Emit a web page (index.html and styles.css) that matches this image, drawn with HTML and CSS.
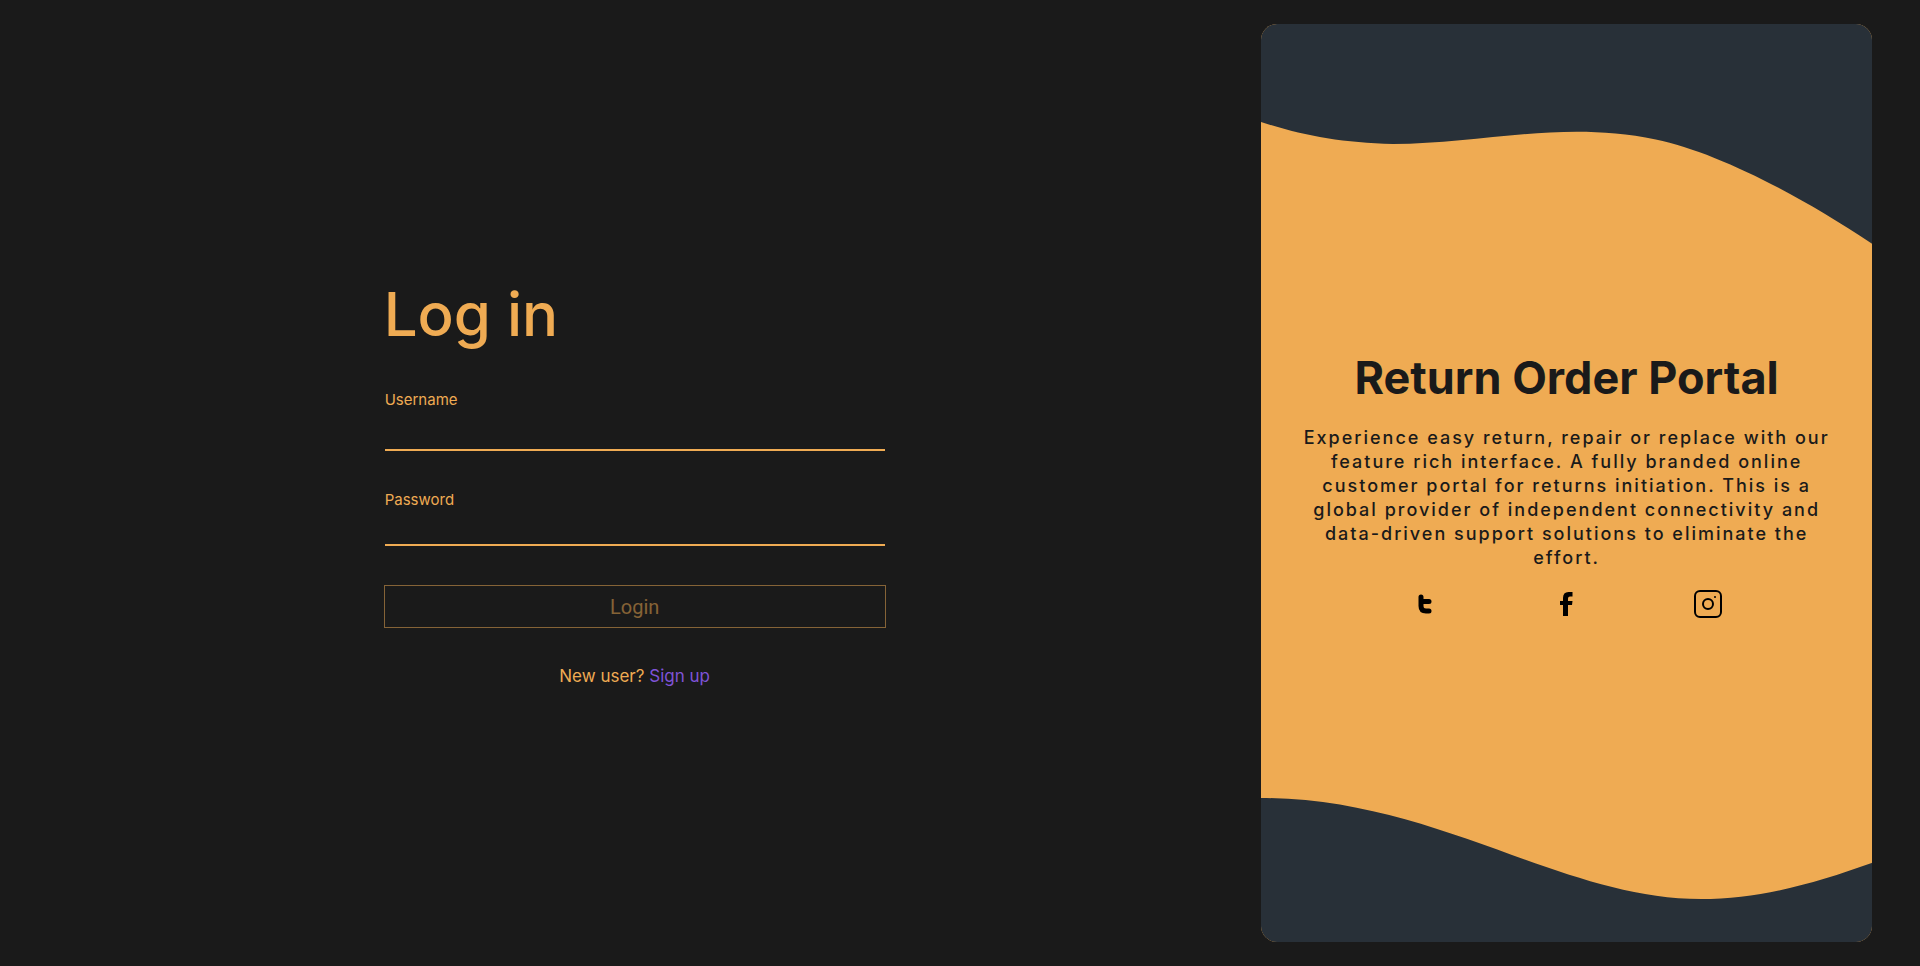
FILE: index.html
```html
<!DOCTYPE html>
<html lang="en">
<head>
<meta charset="utf-8">
<title>Return Order Portal</title>
<link rel="stylesheet" href="styles.css">
</head>
<body>
<main class="page">
  <section class="login">
    <form class="login-form">
      <h1 class="login-title">Log in</h1>
      <div class="field field-user">
        <label for="username">Username</label>
        <input id="username" type="text" autocomplete="username">
      </div>
      <div class="field">
        <label for="password">Password</label>
        <input id="password" type="password" autocomplete="current-password">
      </div>
      <button class="login-button" type="submit" disabled>Login</button>
      <p class="signup">New user? <a href="#">Sign up</a></p>
    </form>
  </section>
  <aside class="card">
    <svg class="waves" viewBox="0 0 611 918" preserveAspectRatio="none" aria-hidden="true">
      <path d="M-2 0H613V221L611 219.500C535 169 455 128 395 115.500C300 96 220 120 132 120C80 119 40 111 0 98L-2 97Z"/>
      <path d="M-2 774H0C175 774 300 875 440 875C500 875 555 859 611 839L613 838V918H-2Z"/>
    </svg>
    <div class="card-body">
      <h2 class="card-title">Return Order Portal</h2>
      <p class="card-text">Experience easy return, repair or replace with our feature rich interface. A fully branded online customer portal for returns initiation. This is a global provider of independent connectivity and data-driven support solutions to eliminate the effort.</p>
      <nav class="social">
        <a href="#" aria-label="Twitter"><svg width="32" height="32" viewBox="0 0 32 32"><path d="M9.500 9A2.500 2.500 0 0 1 14.500 9V11H20A2.500 2.500 0 0 1 20 16H14.500V18Q14.500 20.500 17 20.500H20A2.500 2.500 0 0 1 20 25.500H17Q9.500 25.500 9.500 18Z"/></svg></a>
        <a href="#" aria-label="Facebook"><svg width="32" height="32" viewBox="1 0 32 32"><path d="M13 28V17H10V13H13V10Q13 4 18.500 4H22.500V8.500H20Q18 8.500 18 10.500V13H22.500L22 17H18V28Z"/></svg></a>
        <a href="#" aria-label="Instagram"><svg width="32" height="32" viewBox="1 0 32 32"><g fill="none" stroke="#000" stroke-width="2"><rect x="3" y="3" width="26" height="26" rx="5"/><circle cx="16" cy="16" r="5"/></g><circle cx="23" cy="9" r="1"/></svg></a>
      </nav>
    </div>
  </aside>
</main>
</body>
</html>
```
FILE: styles.css
```css
* {
  box-sizing: border-box;
}

body {
  margin: 0;
  background: #1a1a1a;
  color: #efab53;
  font-family: Inter, "Liberation Sans", sans-serif;
}

.page {
  display: grid;
  grid-template-columns: 2fr 1fr;
  gap: 16px;
  min-height: 100vh;
  padding: 24px 48px 24px 24px;
}

.login {
  display: flex;
  align-items: center;
  justify-content: center;
}

.login-form {
  display: flex;
  flex-direction: column;
  width: 100%;
  max-width: 502px;
}

.login-title {
  margin: 0 0 42px;
  font-size: 60px;
  font-weight: 500;
  line-height: 68px;
}

.field {
  display: flex;
  flex-direction: column;
  margin: 0 1px 39px;
}

.field label {
  font-size: 15px;
  line-height: 20px;
}

.field input {
  height: 36px;
  padding: 0;
  border: 0;
  border-bottom: 2px solid #efab53;
  border-radius: 0;
  outline: 0;
  background: transparent;
  color: inherit;
  font: inherit;
}

.field-user input {
  height: 41px;
}

.login-button {
  height: 43px;
  border: 1px solid #efab53;
  background: transparent;
  color: #efab53;
  font-family: Roboto, sans-serif;
  font-size: 20px;
  font-weight: 400;
  opacity: 0.5;
}

.signup {
  margin: 38px 0 0;
  font-size: 17px;
  line-height: 20px;
  text-align: center;
}

.signup a {
  color: #7f53d6;
  text-decoration: none;
}

.card {
  position: relative;
  display: flex;
  align-items: center;
  justify-content: center;
  overflow: hidden;
  border-radius: 16px;
  background: #efab53;
  color: #1a1a1a;
}

.waves {
  position: absolute;
  inset: 0;
  width: 100%;
  height: 100%;
  overflow: visible;
  fill: #283038;
}

.card-body {
  position: relative;
  display: flex;
  flex-direction: column;
  align-items: center;
  width: 100%;
  padding: 4px 32px 0;
}

.card-title {
  margin: 0 0 20px;
  font-size: 45px;
  font-weight: 700;
  line-height: 56px;
}

.card-text {
  margin: 0;
  font-size: 18px;
  font-weight: 500;
  letter-spacing: 2px;
  line-height: 24px;
  text-align: center;
}

.social {
  display: flex;
  justify-content: space-around;
  width: 78%;
  margin-top: 18px;
}

.social a,
.social svg {
  display: block;
}
```
